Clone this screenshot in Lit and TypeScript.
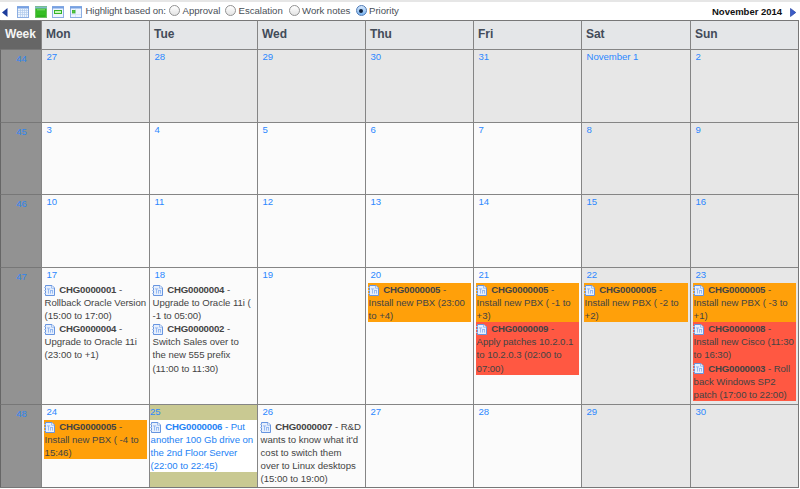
import { LitElement, html, svg, css } from "lit";
import { customElement, property } from "lit/decorators.js";
import { classMap } from "lit/directives/class-map.js";

type Level = "" | "high" | "critical";
interface Change { id: string; lines: string[]; level?: Level; }
interface Day { label: string; kind?: "out" | "weekend" | "today"; changes?: Change[]; }
interface Week { num: number; days: Day[]; }

const c = (id: string, lines: string[], level: Level = ""): Change => ({ id: "CHG000000" + id, lines, level });
const plain = (labels: string[], out = false): Day[] =>
  labels.map((label, i) => ({ label, kind: out ? "out" : i > 4 ? "weekend" : undefined }));

const WEEKS: Week[] = [
  { num: 44, days: plain(["27", "28", "29", "30", "31", "November 1", "2"], true) },
  { num: 45, days: plain(["3", "4", "5", "6", "7", "8", "9"]) },
  { num: 46, days: plain(["10", "11", "12", "13", "14", "15", "16"]) },
  { num: 47, days: [
    { label: "17", changes: [c("1", ["", "Rollback Oracle Version", "(15:00 to 17:00)"]), c("4", ["", "Upgrade to Oracle 11i", "(23:00 to +1)"])] },
    { label: "18", changes: [c("4", ["", "Upgrade to Oracle 11i (", "-1 to 05:00)"]), c("2", ["", "Switch Sales over to", "the new 555 prefix", "(11:00 to 11:30)"])] },
    { label: "19" },
    { label: "20", changes: [c("5", ["", "Install new PBX (23:00", "to +4)"], "high")] },
    { label: "21", changes: [c("5", ["", "Install new PBX ( -1 to", "+3)"], "high"), c("9", ["", "Apply patches 10.2.0.1", "to 10.2.0.3 (02:00 to", "07:00)"], "critical")] },
    { label: "22", kind: "weekend", changes: [c("5", ["", "Install new PBX ( -2 to", "+2)"], "high")] },
    { label: "23", kind: "weekend", changes: [c("5", ["", "Install new PBX ( -3 to", "+1)"], "high"), c("8", ["", "Install new Cisco (11:30", "to 16:30)"], "critical"), c("3", ["Roll", "back Windows SP2", "patch (17:00 to 22:00)"], "critical")] },
  ] },
  { num: 48, days: [
    { label: "24", changes: [c("5", ["", "Install new PBX ( -4 to", "15:46)"], "high")] },
    { label: "25", kind: "today", changes: [c("6", ["Put", "another 100 Gb drive on", "the 2nd Floor Server", "(22:00 to 22:45)"])] },
    { label: "26", changes: [c("7", ["R&D", "wants to know what it'd", "cost to switch them", "over to Linux desktops", "(15:00 to 19:00)"])] },
    { label: "27" }, { label: "28" },
    { label: "29", kind: "weekend" }, { label: "30", kind: "weekend" },
  ] },
];

@customElement("change-entry")
class ChangeEntry extends LitElement {
  @property({ attribute: false }) change!: Change;
  static styles = css`
    :host { display: block; color: #444; }
    .entry { padding-left: .6px; }
    .high { background: #ffa00a; }
    .critical { background: #ff5842; }
    .line { height: 13.1px; line-height: 13.1px; white-space: pre; display: flex; align-items: center; }
    .icon { width: 11px; height: 11px; flex: none; margin: 1px 4.2px 0 -.6px; }
    b { letter-spacing: -0.16px; }
  `;
  render() {
    const [first, ...rest] = this.change.lines;
    return html`<div class=${classMap({ entry: true, high: this.change.level === "high", critical: this.change.level === "critical" })}>
      <div class="line"><svg class="icon" viewBox="0 0 11 11">
        <path d="M1.5 .5H8L10.5 3V10.5H1.5Z" fill="#e6effd" stroke="#6795e0"/>
        <path d="M7.6 .8V3.2H10.2" fill="#fff" stroke="#82a9e9" stroke-width=".8"/>
        <path d="M0 2.5H2M0 5.5H2M0 8.5H2" stroke="#a9c2ea"/>
        <path d="M3 3.9H6.2M4.5 4V8.6M6.5 5V8.6M8.5 5V8.6M6.5 5.5H8.8" stroke="#8fb4f0" stroke-width=".9" fill="none"/>
      </svg><b>${this.change.id}</b><span> - ${first}</span></div>
      ${rest.map((t) => html`<div class="line">${t}</div>`)}
    </div>`;
  }
}

@customElement("day-cell")
class DayCell extends LitElement {
  @property({ attribute: false }) day!: Day;
  static styles = css`
    :host { display: block; min-width: 0; }
    .cell { height: 100%; box-sizing: border-box; padding: 0 2px; background: #fbfbfb; border-left: 1px solid #858585; border-top: 1px solid #858585; }
    .out, .weekend { background: #e7e7e7; }
    .label { height: 15px; line-height: 13px; padding-left: 2.5px; color: #2c88ff; }
    .today { background: #c9c992; padding: 0; }
    .today .label { padding-left: 0; }
    .today .events { background: #fff; }
    .today change-entry { color: #2583f5; }
  `;
  render() {
    const { label, kind, changes = [] } = this.day;
    return html`<div class=${classMap({ cell: true, [kind ?? "regular"]: true })}>
      <div class="label">${label}</div>
      <div class="events">${changes.map((x) => html`<change-entry .change=${x}></change-entry>`)}</div>
    </div>`;
  }
}

@customElement("app-root")
class AppRoot extends LitElement {
  static styles = css`
    :host { display: block; width: 800px; height: 489px; overflow: hidden; background: #fff; font: 9.6px "Liberation Sans", Arial, sans-serif; letter-spacing: -0.04px; color: #4a5058; }
    .bar { height: 20px; box-sizing: border-box; border-top: 2px solid #e6e6e6; display: flex; align-items: center; padding: 0 3px 0 2px; white-space: nowrap; }
    .arrow { width: 7px; height: 9px; flex: none; margin-top: 2px; }
    .views { display: flex; gap: 5.5px; margin: 2px 4px 0 8px; }
    .views svg { width: 12px; height: 12px; display: block; }
    .hint { width: 83.5px; letter-spacing: -.09px; margin-top: -2px; }
    .choice { display: flex; align-items: center; gap: 2.5px; letter-spacing: 0; margin-top: -2px; }
    .radio { width: 11px; height: 11px; box-sizing: border-box; border: 1px solid #929292; border-radius: 50%; background: linear-gradient(#fff, #e4e4e4); margin-top: 1px; display: grid; place-items: center; }
    .radio.on { border-color: #4f7bb6; background: linear-gradient(#d6e8fd, #79b3ef); }
    .radio.on::after { content: ""; width: 4px; height: 4px; border-radius: 50%; background: #10233f; }
    .approval { width: 56px; } .escalation { width: 63.5px; } .notes { width: 67px; }
    .month { margin: 1px 8px 0 auto; color: #111; letter-spacing: -.02px; font-size: 9.5px; }
    .grid { width: 799px; height: 468px; box-sizing: border-box; display: grid; grid-template-columns: 41px repeat(5, 108px) 109px 108px; grid-template-rows: 29px 73px 72px 73px 137px 83px; border-right: 1px solid #777; border-bottom: 1px solid #777; }
    .head { border-left: 1px solid #858585; border-top: 1px solid #777; background: #e4e6e8; color: #424b59; font-size: 12px; font-weight: bold; line-height: 27px; padding-left: 4px; letter-spacing: -.05px; }
    .corner { background: #666; border-left-color: #666; color: #f5f5f5; padding-left: 4px; letter-spacing: -.1px; }
    .week { background: #929292; border-left: 1px solid #666; border-top: 1px solid #777; color: #2f86f0; text-align: center; line-height: 18px; padding-left: 1px; }
  `;
  private radio(name: string, label: string, on = false) {
    return html`<div class="choice ${name}"><span class="radio ${on ? "on" : ""}"></span><span>${label}</span></div>`;
  }
  private view(kind: number) {
    return html`<svg viewBox="0 0 12 12"><rect x=".5" y=".5" width="11" height="11" fill=${kind === 1 ? "#36bd24" : "#eef5fe"} stroke=${kind === 1 ? "#6cbf61" : "#8caee2"}/>
      <path d="M0 1.5H12" stroke=${kind === 1 ? "#82b9cb" : "#76a0e2"} stroke-width="2"/>
      ${kind === 0 ? svg`<path d="M1 4.5H11M1 6.5H11M1 8.5H11M3.5 3V11M5.5 3V11M7.5 3V11M9.5 3V11" stroke="#b1cbed" stroke-width=".7"/>` : ""}
      ${kind === 1 ? svg`<path d="M2 3.8H10" stroke="#82db73"/><path d="M2 10H10" stroke="#27a817"/>` : ""}
      ${kind === 2 ? svg`<rect x="2.5" y="4.5" width="7" height="3" fill="#c9f5bb" stroke="#36b42a"/>` : ""}
      ${kind === 3 ? svg`<path d="M5.5 3V11M1 8.5H11" stroke="#d0e1f6" stroke-width=".7"/><rect x="2.5" y="4.5" width="2.5" height="2.5" fill="#58c542" stroke="#36b42a" stroke-width=".8"/>` : ""}
    </svg>`;
  }
  render() {
    return html`<div class="bar">
        <svg class="arrow" viewBox="0 0 7 9"><path d="M5.5 0V9L0 4.5Z" fill="#1c3d9d"/></svg>
        <div class="views">${[0, 1, 2, 3].map((k) => this.view(k))}</div>
        <span class="hint">Highlight based on:</span>
        ${this.radio("approval", "Approval")}${this.radio("escalation", "Escalation")}${this.radio("notes", "Work notes")}${this.radio("priority", "Priority", true)}
        <b class="month">November 2014</b>
        <svg class="arrow" viewBox="0 0 7 9"><path d="M.5 .5V8.5L5.8 4.5Z" fill="#3c5cc8" stroke="#2745a4" stroke-width=".7"/></svg>
      </div>
      <div class="grid">
        <div class="head corner">Week</div>
        ${["Mon", "Tue", "Wed", "Thu", "Fri", "Sat", "Sun"].map((d) => html`<div class="head">${d}</div>`)}
        ${WEEKS.map((w) => html`<div class="week">${w.num}</div>${w.days.map((d) => html`<day-cell .day=${d}></day-cell>`)}`)}
      </div>`;
  }
}
